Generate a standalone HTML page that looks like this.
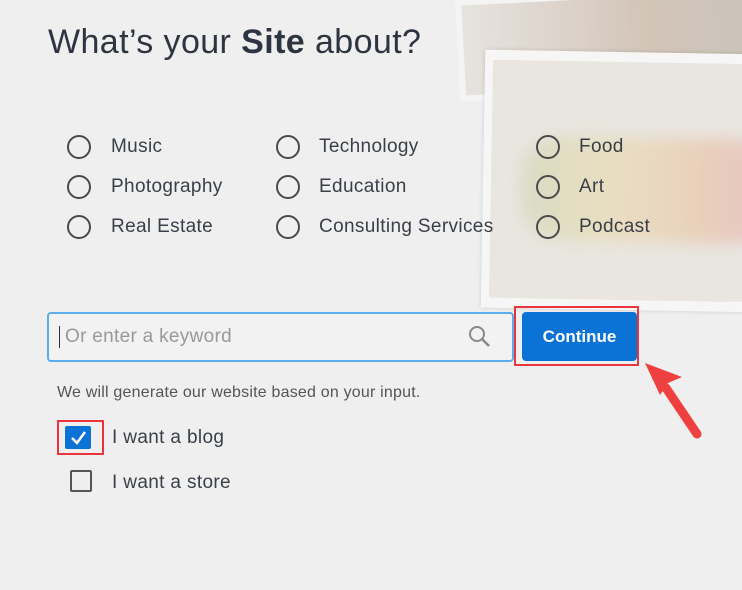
<!DOCTYPE html>
<html><head><meta charset="utf-8"><style>
body{margin:0;width:742px;height:590px;background:#efefef;position:relative;overflow:hidden;font-family:"Liberation Sans",sans-serif;color:#3a3f47}
.abs{position:absolute}
h1{position:absolute;left:48px;top:23px;margin:0;font-weight:normal;font-size:34px;color:#2f3540;letter-spacing:0.4px}
.r{position:absolute;width:20px;height:20px;border:2.5px solid #4a4a4a;border-radius:50%}
.l{position:absolute;font-size:19px;color:#3a3f47;letter-spacing:0.35px;margin-top:1px}
</style></head><body>
<div class="abs" style="left:455px;top:0;width:300px;height:90px;background:linear-gradient(90deg,#e6e3df,#ddd5cd 30%,#d3c5b8 60%,#c9c3bb);transform:rotate(-3deg);transform-origin:0 0;border:6px solid #f4f4f4"></div>
<div class="abs" style="left:483px;top:52px;width:280px;height:258px;background:#f6f6f6;transform:rotate(1deg);box-shadow:0 0 4px rgba(0,0,0,.15)">
 <div class="abs" style="left:8px;top:10px;right:0;bottom:10px;background:#e9e6e1">
  <div class="abs" style="left:30px;top:75px;width:250px;height:105px;background:linear-gradient(90deg,#cdd2ae,#e6d9a8 30%,#ead0a8 50%,#e9c09a 70%,#e4a8aa);opacity:.55;border-radius:40px;filter:blur(8px)"></div>
 </div>
</div>
<h1>What’s your <b>Site</b> about?</h1>
<div class="r" style="left:67px;top:135px"></div><div class="l" style="left:111px;top:135px">Music</div>
<div class="r" style="left:67px;top:175px"></div><div class="l" style="left:111px;top:175px">Photography</div>
<div class="r" style="left:67px;top:215px"></div><div class="l" style="left:111px;top:215px">Real Estate</div>
<div class="r" style="left:276px;top:135px"></div><div class="l" style="left:319px;top:135px">Technology</div>
<div class="r" style="left:276px;top:175px"></div><div class="l" style="left:319px;top:175px">Education</div>
<div class="r" style="left:276px;top:215px"></div><div class="l" style="left:319px;top:215px">Consulting Services</div>
<div class="r" style="left:536px;top:135px"></div><div class="l" style="left:579px;top:135px">Food</div>
<div class="r" style="left:536px;top:175px"></div><div class="l" style="left:579px;top:175px">Art</div>
<div class="r" style="left:536px;top:215px"></div><div class="l" style="left:579px;top:215px">Podcast</div>
<div class="abs" style="left:47px;top:312px;width:463px;height:46px;border:2px solid #5aaeef;border-radius:4px;background:#f2f2f2"></div>
<div class="abs" style="left:59px;top:326px;width:1px;height:22px;background:#333"></div>
<div class="abs" style="left:65px;top:326px;font-size:19px;color:#999;letter-spacing:0.3px">Or enter a keyword</div>
<svg class="abs" style="left:467px;top:324px" width="26" height="26"><circle cx="10" cy="10" r="7" fill="none" stroke="#888" stroke-width="2"/><line x1="15" y1="15" x2="22" y2="22" stroke="#888" stroke-width="2.5"/></svg>
<div class="abs" style="left:514px;top:306px;width:125px;height:60px;border:2px solid #e8363c;box-sizing:border-box"></div>
<div class="abs" style="left:522px;top:312px;width:115px;height:49px;background:#0b72d6;border-radius:4px;color:#fff;font-weight:bold;font-size:17px;text-align:center;line-height:49px">Continue</div>
<svg class="abs" style="left:630px;top:350px" width="80" height="100"><polygon points="15,13 52,27 38,33 30,45" fill="#ef4040"/><line x1="36" y1="38" x2="67" y2="84" stroke="#ef4040" stroke-width="9" stroke-linecap="round"/></svg>
<div class="abs" style="left:57px;top:384px;font-size:16px;color:#555;letter-spacing:0.2px">We will generate our website based on your input.</div>
<div class="abs" style="left:57px;top:420px;width:47px;height:35px;border:2px solid #e8363c;box-sizing:border-box"></div>
<div class="abs" style="left:65px;top:426px;width:26px;height:23px;background:#0b72d6;border-radius:2px"></div>
<svg class="abs" style="left:65px;top:426px" width="26" height="23"><polyline points="7,12 12,17 20,6" fill="none" stroke="#fff" stroke-width="2.5"/></svg>
<div class="l" style="left:112px;top:426px">I want a blog</div>
<div class="abs" style="left:70px;top:470px;width:18px;height:18px;border:2.5px solid #555;border-radius:2px"></div>
<div class="l" style="left:112px;top:471px">I want a store</div>
</body></html>
